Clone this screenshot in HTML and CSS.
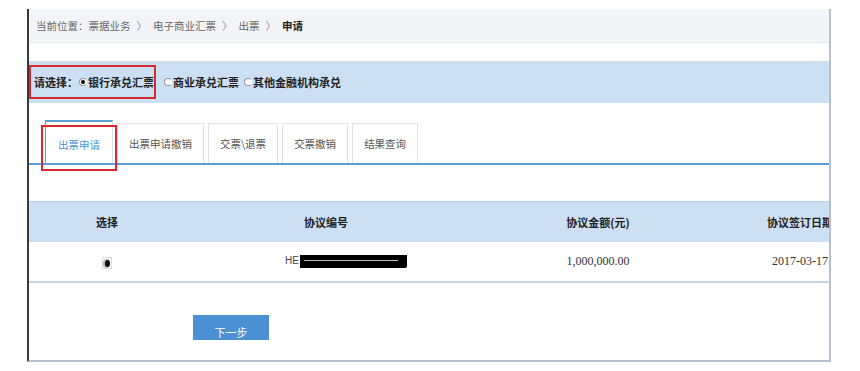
FILE: index.html
```html
<!doctype html>
<html lang="zh-CN">
<head>
<meta charset="utf-8">
<title>电子商业汇票 - 出票申请</title>
<link rel="stylesheet" href="styles.css">
</head>
<body>

<div class="frame">

	<div class="crumb">
		当前位置：票据业务<span class="sep">〉</span>电子商业汇票<span class="sep">〉</span>出票<span class="sep">〉</span><b>申请</b>
	</div>

	<div class="selectBar">
		<div class="redBox">
			请选择：<span class="radio on"></span>银行承兑汇票
		</div>
		<span class="radio"></span>商业承兑汇票
		<span class="radio"></span>其他金融机构承兑
	</div>

	<div class="tabs">
		<a class="tab active" href="#">出票申请<span class="redBox2"></span></a>
		<a class="tab" href="#">出票申请撤销</a>
		<a class="tab" href="#">交票\退票</a>
		<a class="tab" href="#">交票撤销</a>
		<a class="tab" href="#">结果查询</a>
	</div>

	<table class="grid">
		<tr class="head">
			<th class="c1">选择</th>
			<th class="c2">协议编号</th>
			<th class="c3">协议金额(元)</th>
			<th class="c4">协议签订日期</th>
		</tr>
		<tr class="row">
			<td class="c1"><span class="radioBox"><span class="dot"></span></span></td>
			<td class="c2 num">HE<span class="mask"></span></td>
			<td class="c3 digits">1,000,000.00</td>
			<td class="c4 digits">2017-03-17</td>
		</tr>
	</table>

	<button class="nextBtn">下一步</button>

</div>

</body>
</html>
```

FILE: styles.css
```css
* { margin: 0; padding: 0; box-sizing: border-box; }
body {
	background: #fff;
	font-family: "Noto Sans CJK SC", sans-serif;
	font-size: 10.5px;
	color: #333;
}

.frame {
	margin: 9px 0 0 27px;
	width: 804px;
	height: 353px;
	border-left: 2px solid #3a3a3a;
	border-right: 2px solid #b6c1d0;
	border-bottom: 2px solid #b6c1d0;
	overflow: hidden;
}

/* breadcrumb */
.crumb {
	height: 34px;
	line-height: 33px;
	padding-left: 7px;
	background: #f3f4f8;
	border-bottom: 1px solid #e6e8ef;
	color: #666;
}
.crumb .sep { margin: 0 6px; color: #888; }
.crumb b { color: #222; }

/* bill type choice */
.selectBar {
	margin-top: 18px;
	height: 42px;
	background: #cddff2;
	display: flex;
	align-items: center;
	font-weight: bold;
	color: #222;
	font-size: 11px;
}
.redBox {
	display: flex;
	align-items: center;
	height: 34px;
	padding: 0 0 0 3px;
	margin-right: 3px;
	border: 2px solid #d52a2e;
}
.radio {
	display: inline-block;
	width: 8px; height: 8px;
	margin: 0 1px 0 5px;
	border-radius: 50%;
	border: 1px solid #999;
	border-right-color: transparent;
	background: #fff;
	position: relative;
}
.redBox .radio { margin-left: 1px; }
.radio.on::after {
	content: "";
	position: absolute;
	left: 1px; top: 1px;
	width: 4px; height: 4px;
	border-radius: 50%;
	background: #000;
}

/* tabs */
.tabs {
	display: flex;
	align-items: flex-end;
	gap: 4px;
	padding: 17px 0 0 16px;
	border-bottom: 2px solid #5d9fd6;
}
.tab {
	position: relative;
	display: block;
	height: 40px;
	line-height: 40px;
	padding: 0 11px;
	border: 1px solid #dfe2e6;
	border-bottom: none;
	color: #555;
	text-decoration: none;
}
.tab.active {
	height: 43px;
	line-height: 45px;
	padding: 0 12px;
	border-top: 2px solid #5d9fd6;
	border-left: 1px solid #5d9fd6;
	color: #4a95cf;
}
.redBox2 {
	position: absolute;
	left: -5px; top: 3px;
	width: 76px; height: 46px;
	border: 2px solid #d52a2e;
	z-index: 2;
}

/* agreements table */
.grid {
	margin-top: 36px;
	width: 842px;
	border-collapse: collapse;
	table-layout: fixed;
}
.grid .c1 { width: 156px; }
.grid .c2 { width: 282px; }
.grid .c3 { width: 262px; }
.grid .c4 { width: 142px; }
.head th {
	height: 40px;
	background: #cddff2;
	border-top: 1px solid #bcd0e4;
	font-size: 11px;
	color: #222;
	text-align: center;
	white-space: nowrap;
	overflow: hidden;
}
.row td {
	height: 40px;
	border-bottom: 2px solid #c6d3e2;
	text-align: center;
	vertical-align: middle;
}
.row td.num {
	text-align: left;
	padding-left: 100px;
	font-family: "Liberation Sans", sans-serif;
	font-size: 10px;
	color: #444;
}
.digits {
	font-family: "Liberation Serif", serif;
	font-size: 12px;
	color: #333;
	white-space: nowrap;
}
.radioBox {
	display: inline-block;
	width: 10px; height: 12px;
	border: 1px solid #ddd;
	position: relative;
	vertical-align: middle;
}
.radioBox .dot {
	position: absolute;
	left: 2px; top: 2px;
	width: 5px; height: 7px;
	border-radius: 50%;
	background: #111;
	box-shadow: -1px 0 0 1px #bbb;
}
.mask {
	display: inline-block;
	width: 107px; height: 13px;
	margin-left: 1px;
	vertical-align: middle;
	background: #000;
	border-radius: 0 0 2px 0;
	background-image: linear-gradient(#000 5px, #bbb 5px, #bbb 6px, #000 6px);
	background-size: 94px 13px;
	background-position: 4px 0;
	background-repeat: no-repeat;
}

.nextBtn {
	display: block;
	margin: 32px 0 0 164px;
	width: 76px; height: 25px;
	padding-top: 10px;
	line-height: 15px;
	overflow: hidden;
	border: none;
	background: #4a90d2;
	color: #fff;
	font-family: "Noto Sans CJK SC", sans-serif;
	font-size: 11px;
}
```
